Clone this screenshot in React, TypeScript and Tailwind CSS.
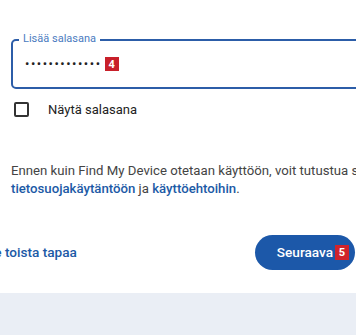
import React from "react";

export default function App() {
  return (
    <div className="w-[356px] h-[335px] overflow-hidden bg-white flex flex-col" style={{ fontFamily: "Roboto, 'Noto Sans', sans-serif" }}>
      <div className="w-[440px] shrink-0 flex flex-col">
        {/* password field */}
        <div className="mt-[39px] ml-[11px] h-[50px] border-2 border-[#2c5da8] rounded-[5px] relative flex items-center pl-[12px]">
          <span className="absolute -top-[9px] left-[6px] px-[4px] bg-white text-[11px] leading-[14px] text-[#4b7bc0]">Lisää salasana</span>
          <span className="text-[13px] text-[#222] tracking-[1.5px] leading-none mt-[-1px]">•••••••••••••</span>
          <span className="ml-[3px] w-[14px] h-[14px] bg-[#c8202a] text-white text-[11px] font-bold flex items-center justify-center leading-none">4</span>
        </div>
        {/* show password */}
        <div className="mt-[13px] ml-[14px] flex items-center h-[15px]">
          <span className="w-[15px] h-[15px] border-2 border-[#333] rounded-[2px]" />
          <span className="ml-[19px] text-[13px] text-[#222]">Näytä salasana</span>
        </div>
        {/* paragraph */}
        <div className="mt-[45px] ml-[11px] text-[13.2px] leading-[18px] text-[#444] whitespace-nowrap">
          Ennen kuin Find My Device otetaan käyttöön, voit tutustua sen
          <br />
          <span className="text-[#1c5aa6] font-medium">tietosuojakäytäntöön</span> ja{" "}
          <span className="text-[#1c5aa6] font-medium">käyttöehtoihin</span>.
        </div>
        {/* actions */}
        <div className="mt-[37px] h-[35px] w-[356px] flex items-center justify-between">
          <span className="ml-[-43px] text-[13.6px] font-medium text-[#1c5aa6] whitespace-nowrap">Kokeile toista tapaa</span>
          <button className="mr-[1px] w-[100px] h-[35px] rounded-full bg-[#1c58a9] flex items-center justify-end pr-[6px]">
            <span className="text-[13.6px] font-medium text-white">Seuraava</span>
            <span className="ml-[2px] w-[14px] h-[15px] bg-[#d0232b] text-white text-[11px] font-bold flex items-center justify-center leading-none">5</span>
          </button>
        </div>
      </div>
      <div className="mt-[23px] flex-1 bg-[#eaeef5]" />
    </div>
  );
}
